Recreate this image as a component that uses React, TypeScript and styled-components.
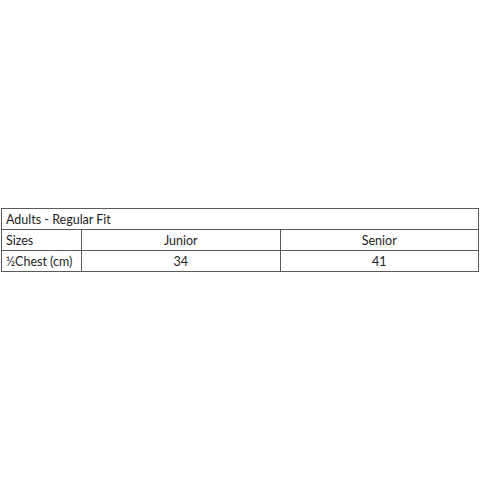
import React from "react";
import styled, { createGlobalStyle } from "styled-components";

const Global = createGlobalStyle`
  html, body {
    margin: 0;
    padding: 0;
    background: #fff;
  }
  body {
    font-family: Lato, "Noto Sans", sans-serif;
    color: #1e1e1e;
  }
`;

const Page = styled.div`
  min-height: 480px;
  display: flex;
  align-items: center;
  padding: 0 1px;
  box-sizing: border-box;
`;

const SizeTable = styled.table`
  width: 100%;
  border-collapse: collapse;
  table-layout: fixed;
  font-size: 12.5px;
`;

const Cell = styled.td<{ $center?: boolean }>`
  border: 1px solid #5a5a5a;
  height: 20px;
  padding: 0 4px;
  text-align: ${({ $center }) => ($center ? "center" : "left")};
  white-space: nowrap;
`;

const sizes = [
  { name: "Junior", chest: 34 },
  { name: "Senior", chest: 41 },
];

export default function App() {
  return (
    <>
      <Global />
      <Page>
        <SizeTable>
          <colgroup>
            <col style={{ width: 80 }} />
            <col />
            <col />
          </colgroup>
          <tbody>
            <tr>
              <Cell colSpan={3}>Adults - Regular Fit</Cell>
            </tr>
            <tr>
              <Cell>Sizes</Cell>
              {sizes.map((s) => (
                <Cell key={s.name} $center>
                  {s.name}
                </Cell>
              ))}
            </tr>
            <tr>
              <Cell>½Chest (cm)</Cell>
              {sizes.map((s) => (
                <Cell key={s.name} $center>
                  {s.chest}
                </Cell>
              ))}
            </tr>
          </tbody>
        </SizeTable>
      </Page>
    </>
  );
}
